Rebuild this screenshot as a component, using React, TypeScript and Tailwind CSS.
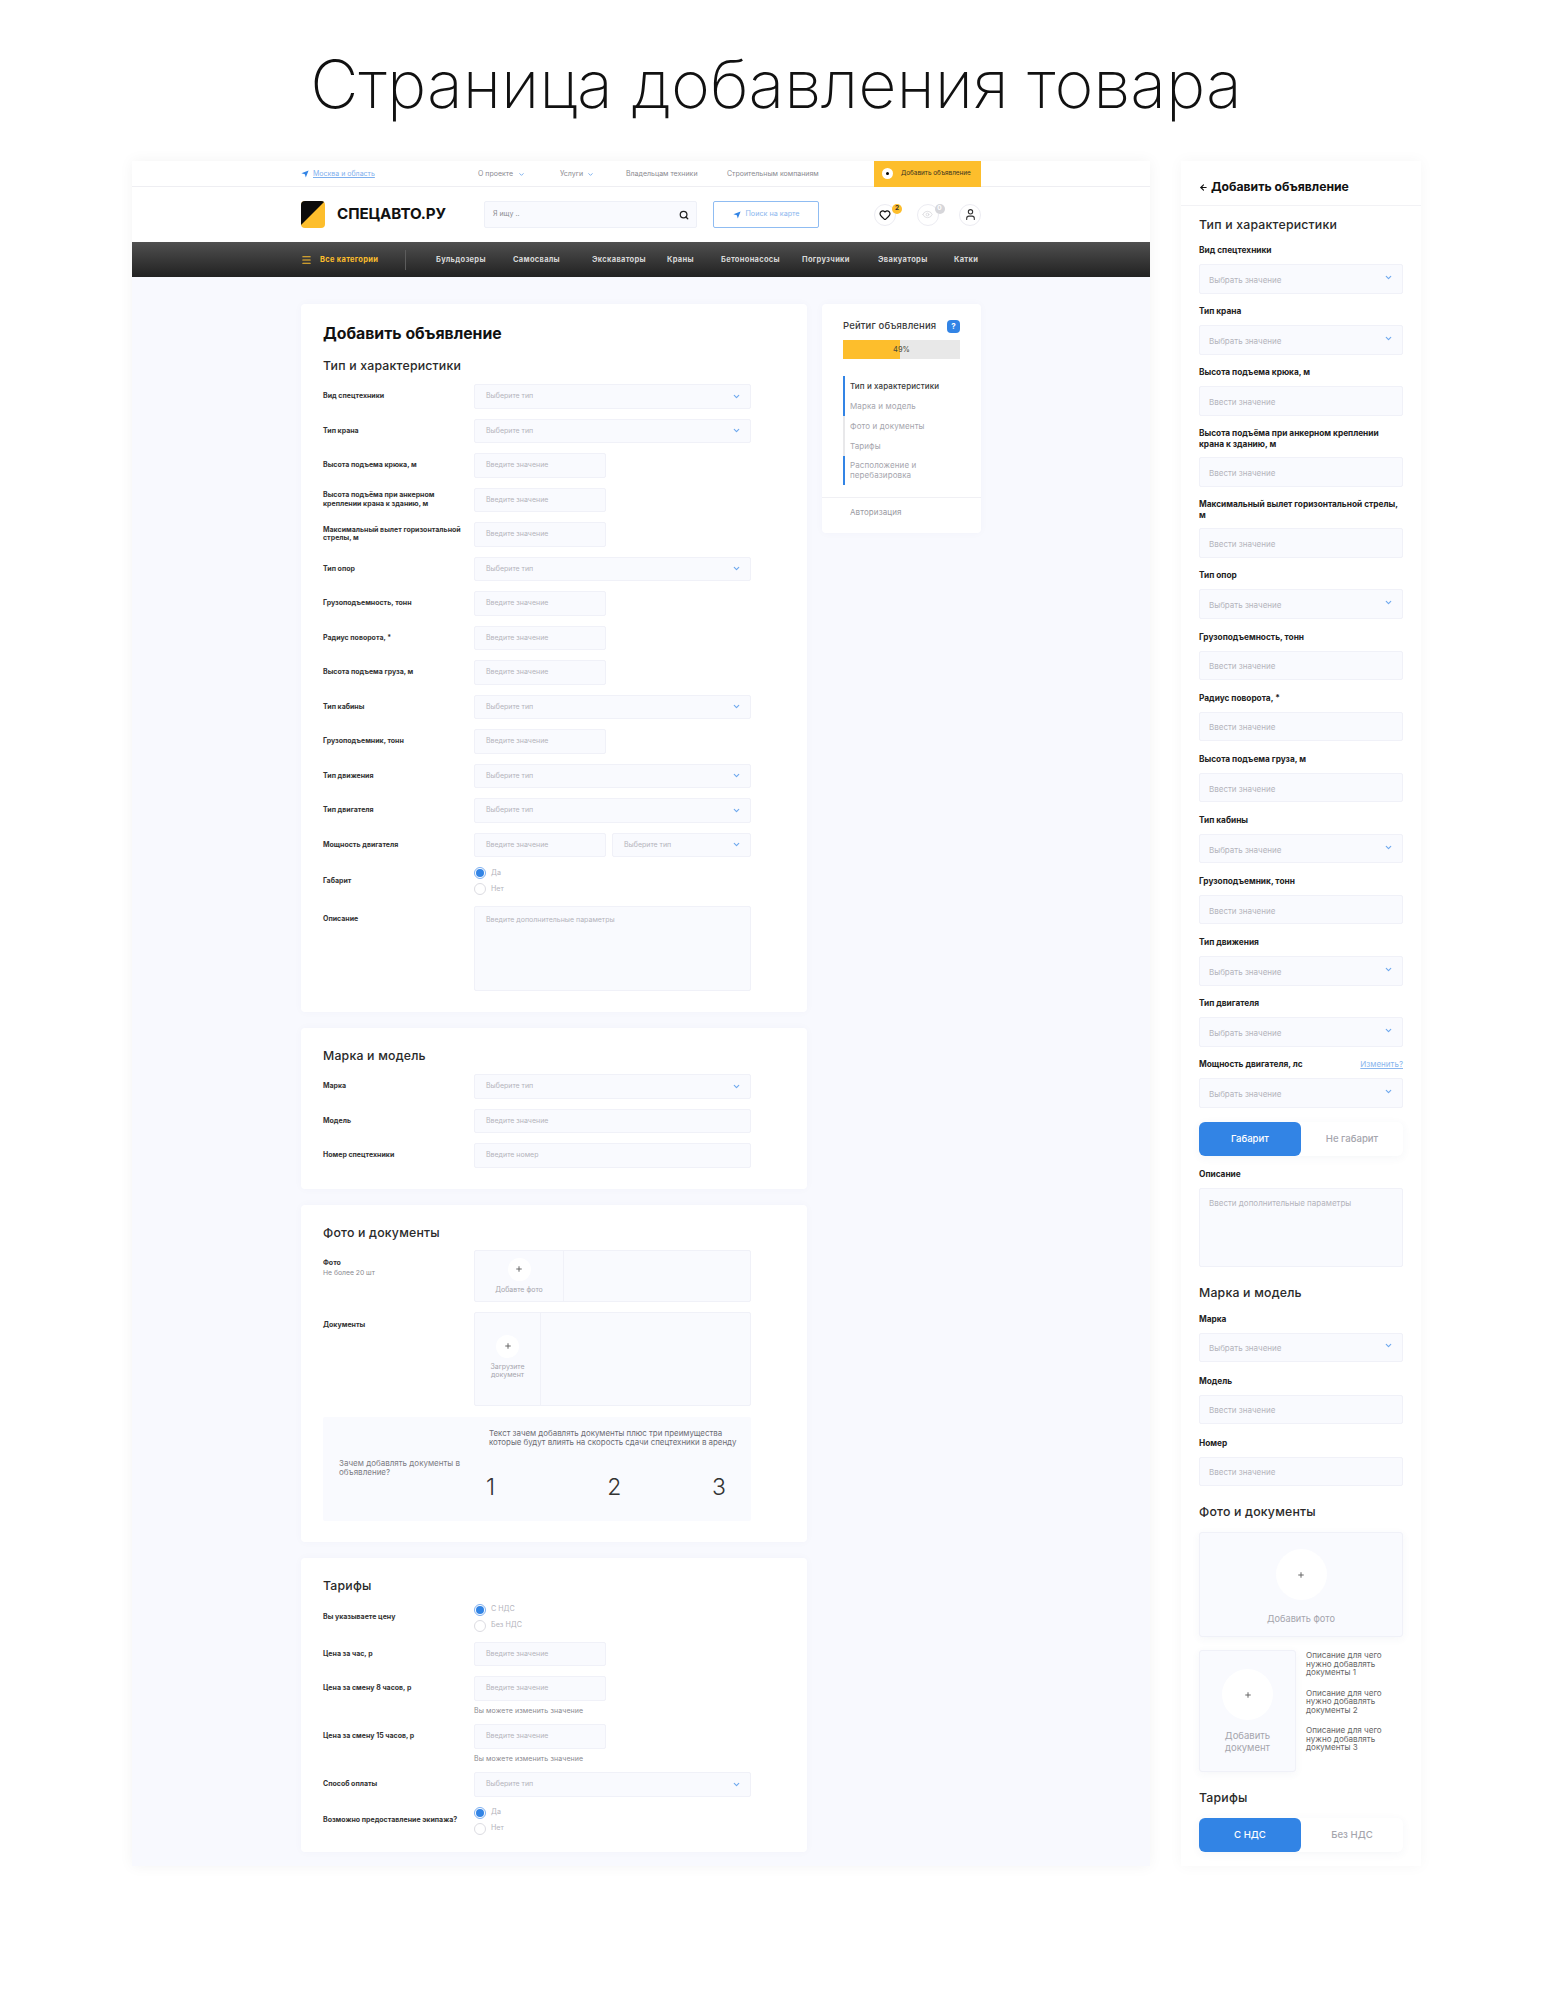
import React from "react";
import { ChevronDown, Search, Heart, Eye, User, Menu, Plus, ArrowLeft } from "lucide-react";

const Arrow = ({ className }: { className?: string }) => (
  <svg viewBox="0 0 10 10" className={className} fill="currentColor"><path d="M0.5 4.2 9.5 0.5 6 9.5 4.8 5.4Z" /></svg>
);

const Logo = () => (
  <svg viewBox="0 0 24 27" className="h-[27px] w-[24px]">
    <defs><clipPath id="lg"><rect x="0" y="0" width="24" height="27" rx="4" /></clipPath></defs>
    <g clipPath="url(#lg)">
      <rect width="24" height="27" fill="#fdbe2c" />
      <path d="M0 0H24L0 24Z" fill="#0b0b0b" />
    </g>
  </svg>
);

const Chev = () => <ChevronDown className="h-[9px] w-[9px] text-[#6ea8ee]" strokeWidth={3} />;

const Field = ({ text, wide, select, w }: { text: string; wide?: boolean; select?: boolean; w?: string }) => (
  <div className={`flex h-[24.5px] items-center justify-between rounded-[2px] border border-[#f0f1f8] bg-[#f9fafe] pl-[11px] pr-[9px] text-[7px] text-[#b4b4bc] ${w ?? (wide ? "w-[277px]" : "w-[132px]")}`}>
    <span>{text}</span>
    {select && <Chev />}
  </div>
);

const Lbl = ({ children }: { children: React.ReactNode }) => (
  <div className="w-[151px] pr-[2px] text-[7px] font-bold leading-[8.3px] text-[#333]">{children}</div>
);

const Row = ({ label, children }: { label: React.ReactNode; children: React.ReactNode }) => (
  <div className="flex min-h-[24.5px] items-center">
    <Lbl>{label}</Lbl>
    {children}
  </div>
);

const TS = "Выберите тип";
const TI = "Введите значение";

const Radio = ({ on, text }: { on?: boolean; text: string }) => (
  <div className="flex h-[12px] items-center gap-[5px]">
    <span className={`flex h-[12px] w-[12px] items-center justify-center rounded-full border ${on ? "border-[#7fb0f0]" : "border-[#dcdce2]"}`}>
      {on && <span className="h-[8px] w-[8px] rounded-full bg-[#3284e5]" />}
    </span>
    <span className="text-[7.2px] text-[#b4b4bc]">{text}</span>
  </div>
);

const Radios = ({ a, b }: { a: string; b: string }) => (
  <div className="flex h-[28px] flex-col justify-between">
    <Radio on text={a} />
    <Radio text={b} />
  </div>
);

const Card = ({ children, className }: { children: React.ReactNode; className?: string }) => (
  <div className={`rounded-[4px] bg-white pl-[22px] pr-[56px] shadow-[0_0_8px_rgba(60,70,120,0.03)] ${className ?? ""}`}>{children}</div>
);

const H2 = ({ children }: { children: React.ReactNode }) => (
  <div className="h-[16px] text-[12.3px] font-medium leading-[16px] tracking-[0.2px] text-[#2a2a2a]">{children}</div>
);

const PlusCircle = ({ size }: { size: string }) => (
  <div className={`flex items-center justify-center rounded-full bg-white ${size}`}>
    <Plus className="h-[8px] w-[8px] text-[#666]" strokeWidth={3} />
  </div>
);

const TopBar = () => (
  <div className="flex h-[26px] items-center border-b border-[#eeeef2] pl-[169px] pt-[1px] text-[7px] text-[#8a8a90]">
    <div className="flex w-[177px] items-center gap-[4px]">
      <Arrow className="h-[8px] w-[8px] text-[#3284e5]" />
      <span className="text-[#7fb0ee] underline">Москва и область</span>
    </div>
    <div className="flex w-[82px] items-center gap-[5px]">О проекте <ChevronDown className="h-[7px] w-[7px] text-[#6ea8ee]" strokeWidth={3} /></div>
    <div className="flex w-[66px] items-center gap-[4px]">Услуги <ChevronDown className="h-[7px] w-[7px] text-[#6ea8ee]" strokeWidth={3} /></div>
    <div className="w-[101px]">Владельцам техники</div>
    <div className="w-[147px]">Строительным компаниям</div>
    <div className="mt-[-1px] flex h-[26px] w-[107px] items-center gap-[8px] bg-[#fdbe2c] pl-[8px] text-[6.4px] text-[#3a3320]">
      <span className="flex h-[11px] w-[11px] items-center justify-center rounded-full bg-white">
        <span className="h-[3px] w-[3px] rounded-full bg-black" />
      </span>
      Добавить объявление
    </div>
  </div>
);

const IconCircle = ({ children, badge, badgeClass }: { children: React.ReactNode; badge?: string; badgeClass?: string }) => (
  <div className="relative flex h-[22px] w-[22px] items-center justify-center rounded-full border border-[#ececf2] bg-white">
    {children}
    {badge && (
      <span className={`absolute right-[-7px] top-[-1px] flex h-[10px] w-[10px] items-center justify-center rounded-full text-[6.5px] font-bold ${badgeClass}`}>{badge}</span>
    )}
  </div>
);

const Header = () => (
  <div className="flex h-[55px] items-center pl-[169px]">
    <Logo />
    <div className="w-[159px] pl-[12px] text-[15.2px] font-bold tracking-[-0.1px] text-[#111]">СПЕЦАВТО.РУ</div>
    <div className="flex h-[27px] w-[213px] items-center justify-between rounded-[2px] border border-[#eef0f7] bg-[#f9fafe] pl-[8px] pr-[7px] text-[7px] text-[#8a8a90]">
      Я ищу ..
      <Search className="h-[10px] w-[10px] text-[#222]" strokeWidth={3} />
    </div>
    <div className="ml-[16px] flex h-[27px] w-[106px] items-center justify-center gap-[5px] rounded-[2px] border border-[#8fbcf2] text-[7.2px] text-[#8ab6ee]">
      <Arrow className="h-[8px] w-[8px] text-[#3284e5]" />
      Поиск на карте
    </div>
    <div className="ml-[55px] flex w-[107px] justify-between">
      <IconCircle badge="2" badgeClass="bg-[#fdbe2c] text-[#333]"><Heart className="h-[12px] w-[12px] text-[#111]" strokeWidth={2.4} /></IconCircle>
      <IconCircle badge="0" badgeClass="bg-[#d6d6da] text-white"><Eye className="h-[11px] w-[11px] text-[#d4d4d8]" strokeWidth={1.6} /></IconCircle>
      <IconCircle><User className="h-[13px] w-[13px] text-[#333]" strokeWidth={2} /></IconCircle>
    </div>
  </div>
);

const navItems: [string, string][] = [
  ["Бульдозеры", "w-[77px]"],
  ["Самосвалы", "w-[79px]"],
  ["Экскаваторы", "w-[75px]"],
  ["Краны", "w-[54px]"],
  ["Бетононасосы", "w-[81px]"],
  ["Погрузчики", "w-[76px]"],
  ["Эвакуаторы", "w-[76px]"],
  ["Катки", "w-[24px]"],
];

const Nav = () => (
  <div className="flex h-[35px] items-center bg-gradient-to-b from-[#505050] to-[#222222] pl-[169px] text-[7.5px] font-bold tracking-[0.3px] text-[#d8d8d8]">
    <Menu className="h-[12px] w-[11px] text-[#fdbe2c]" strokeWidth={2.5} />
    <div className="ml-[8px] w-[85px] text-[#fdbe2c]">Все категории</div>
    <div className="mr-[30px] h-[20px] w-px bg-[#5c5c5c]" />
    {navItems.map(([t, w]) => (
      <div key={t} className={`shrink-0 ${w}`}>{t}</div>
    ))}
  </div>
);

const MainForm = () => (
  <div className="flex w-[506px] flex-col gap-[16px]">
    <Card className="pb-[21px] pt-[22px]">
      <div className="h-[16px] text-[15.8px] font-bold leading-[16px] text-[#111]">Добавить объявление</div>
      <div className="mt-[16px]"><H2>Тип и характеристики</H2></div>
      <div className="mt-[10px] flex flex-col gap-[10px]">
        <Row label="Вид спецтехники"><Field text={TS} wide select /></Row>
        <Row label="Тип крана"><Field text={TS} wide select /></Row>
        <Row label="Высота подъема крюка, м"><Field text={TI} /></Row>
        <Row label={<>Высота подъёма при анкерном<br />креплении крана к зданию, м</>}><Field text={TI} /></Row>
        <Row label={<>Максимальный вылет горизонтальной<br />стрелы, м</>}><Field text={TI} /></Row>
        <Row label="Тип опор"><Field text={TS} wide select /></Row>
        <Row label="Грузоподъемность, тонн"><Field text={TI} /></Row>
        <Row label="Радиус поворота, *"><Field text={TI} /></Row>
        <Row label="Высота подъема груза, м"><Field text={TI} /></Row>
        <Row label="Тип кабины"><Field text={TS} wide select /></Row>
        <Row label="Грузоподъемник, тонн"><Field text={TI} /></Row>
        <Row label="Тип движения"><Field text={TS} wide select /></Row>
        <Row label="Тип двигателя"><Field text={TS} wide select /></Row>
        <Row label="Мощность двигателя">
          <div className="flex w-[277px] justify-between">
            <Field text={TI} />
            <Field text={TS} select w="w-[139px]" />
          </div>
        </Row>
        <Row label="Габарит"><Radios a="Да" b="Нет" /></Row>
        <div className="mt-[1px] flex">
          <div className="pt-[9px]"><Lbl>Описание</Lbl></div>
          <div className="h-[85px] w-[277px] rounded-[2px] border border-[#f0f1f8] bg-[#f9fafe] pl-[11px] pt-[9px] text-[7px] leading-[8px] text-[#b4b4bc]">
            Введите дополнительные параметры
          </div>
        </div>
      </div>
    </Card>

    <Card className="pb-[21px] pt-[20px]">
      <H2>Марка и модель</H2>
      <div className="mt-[10px] flex flex-col gap-[10px]">
        <Row label="Марка"><Field text={TS} wide select /></Row>
        <Row label="Модель"><Field text={TI} wide /></Row>
        <Row label="Номер спецтехники"><Field text="Введите номер" wide /></Row>
      </div>
    </Card>

    <Card className="pb-[21px] pt-[20px]">
      <H2>Фото и документы</H2>
      <div className="mt-[9px] flex">
        <div className="w-[151px] pt-[9px]">
          <Lbl>Фото</Lbl>
          <div className="mt-[2px] text-[6.8px] leading-[8px] text-[#8a8a90]">Не более 20 шт</div>
        </div>
        <div className="flex h-[52px] w-[277px] rounded-[2px] border border-[#f0f1f8] bg-[#f9fafe]">
          <div className="flex w-[89px] flex-col items-center border-r border-[#f0f1f8] pt-[7px]">
            <PlusCircle size="h-[23px] w-[23px]" />
            <div className="mt-[4px] text-[7px] leading-[9px] text-[#a5a5ad]">Добавте фото</div>
          </div>
        </div>
      </div>
      <div className="mt-[10px] flex">
        <div className="pt-[9px]"><Lbl>Документы</Lbl></div>
        <div className="flex h-[94px] w-[277px] rounded-[2px] border border-[#f0f1f8] bg-[#f9fafe]">
          <div className="flex w-[66px] flex-col items-center border-r border-[#f0f1f8] pt-[22px]">
            <PlusCircle size="h-[23px] w-[23px]" />
            <div className="mt-[5px] text-center text-[7px] leading-[8.5px] text-[#a5a5ad]">Загрузите<br />документ</div>
          </div>
        </div>
      </div>
      <div className="mt-[11px] flex h-[104px] w-[428px] rounded-[2px] bg-[#f9fafe] pl-[16px]">
        <div className="w-[150px] pt-[42px] text-[8px] leading-[9.4px] text-[#7c7c84]">Зачем добавлять документы в<br />объявление?</div>
        <div className="pt-[12px]">
          <div className="text-[7.9px] leading-[9.4px] text-[#6c6c74]">
            Текст зачем добавлять документы плюс три преимущества<br />которые будут влиять на скорость сдачи спецтехники в аренду
          </div>
          <div className="ml-[-3px] mt-[27px] flex w-[240px] text-[23px] font-light leading-[26px] text-[#333]">
            <div className="w-[125px]">1</div>
            <div className="w-[108px]">2</div>
            <div>3</div>
          </div>
        </div>
      </div>
    </Card>

    <Card className="pb-[17px] pt-[20px]">
      <H2>Тарифы</H2>
      <div className="mt-[10px] flex flex-col gap-[10px]">
        <Row label="Вы указываете цену"><Radios a="С НДС" b="Без НДС" /></Row>
        <Row label="Цена за час, р"><Field text={TI} /></Row>
        <div>
          <Row label="Цена за смену 8 часов, р"><Field text={TI} /></Row>
          <div className="ml-[151px] h-[13.5px] pt-[5px] text-[7px] leading-[9px] tracking-[0.1px] text-[#8a8a90]">Вы можете изменить значение</div>
        </div>
        <div>
          <Row label="Цена за смену 15 часов, р"><Field text={TI} /></Row>
          <div className="ml-[151px] h-[13.5px] pt-[5px] text-[7px] leading-[9px] tracking-[0.1px] text-[#8a8a90]">Вы можете изменить значение</div>
        </div>
        <Row label="Способ оплаты"><Field text={TS} wide select /></Row>
        <Row label="Возможно предоставление экипажа?"><Radios a="Да" b="Нет" /></Row>
      </div>
    </Card>
  </div>
);

const steps: [string, boolean, boolean][] = [
  ["Тип и характеристики", true, true],
  ["Марка и модель", true, false],
  ["Фото и документы", false, false],
  ["Тарифы", false, false],
];

const RatingCard = () => (
  <div className="ml-[15px] h-[229px] w-[159px] rounded-[4px] bg-white pt-[15px] shadow-[0_0_8px_rgba(60,70,120,0.03)]">
    <div className="flex h-[14px] items-center justify-between pl-[21px] pr-[21px]">
      <span className="text-[9.5px] font-medium tracking-[0.15px] text-[#3a3a3a]">Рейтиг объявления</span>
      <span className="flex h-[13px] w-[13px] items-center justify-center rounded-[4px] bg-[#3284e5] text-[8px] font-bold text-white">?</span>
    </div>
    <div className="ml-[21px] mt-[7px] flex h-[19px] w-[117px] items-center justify-center bg-[linear-gradient(to_right,#fdbe2c_49%,#e8e8e8_49%)] text-[7.5px] text-[#4a4a3a]">49%</div>
    <div className="ml-[21px] mt-[17px]">
      {steps.map(([t, blue, dark]) => (
        <div key={t} className={`flex h-[20px] items-center border-l-[2px] pl-[5px] text-[8px] tracking-[0.1px] ${blue ? "border-[#3284e5]" : "border-[#e8e8ea]"} ${dark ? "font-medium text-[#3a3a3a]" : "text-[#a5a5ad]"}`}>{t}</div>
      ))}
      <div className="flex h-[29px] items-center border-l-[2px] border-[#3284e5] pl-[5px] text-[8px] leading-[9.5px] tracking-[0.1px] text-[#a5a5ad]">
        <span>Расположение и<br />перебазировка</span>
      </div>
    </div>
    <div className="mt-[12px] border-t border-[#f0f0f4] pl-[28px] pt-[10px] text-[8px] leading-[9px] tracking-[0.1px] text-[#9a9aa2]">Авторизация</div>
  </div>
);

const MLabel = ({ children, tight }: { children: React.ReactNode; tight?: boolean }) => (
  <div className={`text-[8.3px] font-bold text-[#222] ${tight ? "leading-[10.5px]" : "leading-[11px]"}`}>{children}</div>
);

const MField = ({ text, select }: { text: string; select?: boolean }) => (
  <div className="mt-[8px] flex h-[29.5px] items-center justify-between rounded-[2px] border border-[#f0f1f8] bg-[#f9fafe] pl-[9px] pr-[9px] text-[8px] text-[#b4b4bc]">
    <span className="pt-[2px]">{text}</span>
    {select && <div className="mb-[3px]"><Chev /></div>}
  </div>
);

const MGroup = ({ label, text, select, tight }: { label: React.ReactNode; text: string; select?: boolean; tight?: boolean }) => (
  <div>
    <MLabel tight={tight}>{label}</MLabel>
    <MField text={text} select={select} />
  </div>
);

const Toggle = ({ a, b }: { a: string; b: string }) => (
  <div className="flex h-[34px] w-[204px] rounded-[6px] bg-white text-[9.6px] shadow-[0_2px_10px_rgba(60,70,120,0.05)]">
    <div className="flex w-[102px] items-center justify-center rounded-[6px] bg-[#3284e5] font-medium text-white">{a}</div>
    <div className="flex w-[102px] items-center justify-center font-medium text-[#a5a5ad]">{b}</div>
  </div>
);

const MS = "Выбрать значение";
const MI = "Ввести значение";

const Mobile = () => (
  <div className="w-[240px] bg-white shadow-[0_0_14px_rgba(0,0,0,0.04)]">
    <div className="flex h-[45px] items-center gap-[3px] border-b border-[#f2f2f5] pl-[18px] pt-[9px] text-[12.2px] font-bold text-[#111]">
      <ArrowLeft className="h-[9px] w-[9px]" strokeWidth={3} />
      Добавить объявление
    </div>
    <div className="px-[18px] pb-[14px] pt-[11px]">
      <H2>Тип и характеристики</H2>
      <div className="mt-[12px] flex flex-col gap-[12.6px]">
        <MGroup label="Вид спецтехники" text={MS} select />
        <MGroup label="Тип крана" text={MS} select />
        <MGroup label="Высота подъема крюка, м" text={MI} />
        <MGroup tight label={<>Высота подъёма при анкерном креплении<br />крана к зданию, м</>} text={MI} />
        <MGroup tight label={<>Максимальный вылет горизонтальной стрелы,<br />м</>} text={MI} />
        <MGroup label="Тип опор" text={MS} select />
        <MGroup label="Грузоподъемность, тонн" text={MI} />
        <MGroup label="Радиус поворота, *" text={MI} />
        <MGroup label="Высота подъема груза, м" text={MI} />
        <MGroup label="Тип кабины" text={MS} select />
        <MGroup label="Грузоподъемник, тонн" text={MI} />
        <MGroup label="Тип движения" text={MS} select />
        <MGroup label="Тип двигателя" text={MS} select />
        <div>
          <div className="flex items-center justify-between">
            <MLabel>Мощность двигателя, лс</MLabel>
            <span className="text-[8px] leading-[11px] text-[#8ab6ee] underline">Изменить?</span>
          </div>
          <MField text={MS} select />
        </div>
      </div>
      <div className="mt-[14px]"><Toggle a="Габарит" b="Не габарит" /></div>
      <div className="mt-[13px]"><MLabel>Описание</MLabel></div>
      <div className="mt-[8px] h-[79px] rounded-[2px] border border-[#f0f1f8] bg-[#f9fafe] pl-[9px] pt-[9px] text-[8px] leading-[10px] text-[#b4b4bc]">Ввести дополнительные параметры</div>
      <div className="mt-[18px]"><H2>Марка и модель</H2></div>
      <div className="mt-[13px] flex flex-col gap-[13.5px]">
        <MGroup label="Марка" text={MS} select />
        <MGroup label="Модель" text={MI} />
        <MGroup label="Номер" text={MI} />
      </div>
      <div className="mt-[18px]"><H2>Фото и документы</H2></div>
      <div className="mt-[12px] flex h-[105px] flex-col items-center rounded-[3px] border border-[#f0f1f8] bg-[#f9fafe] pt-[16px] shadow-[0_2px_8px_rgba(60,70,120,0.05)]">
        <PlusCircle size="h-[51px] w-[51px]" />
        <div className="mt-[13px] text-[9.2px] leading-[11px] text-[#a5a5ad]">Добавить фото</div>
      </div>
      <div className="mt-[13px] flex">
        <div className="flex h-[122px] w-[97px] flex-col items-center rounded-[3px] border border-[#f0f1f8] bg-[#f9fafe] pt-[18px] shadow-[0_2px_8px_rgba(60,70,120,0.05)]">
          <PlusCircle size="h-[51px] w-[51px]" />
          <div className="mt-[10px] text-center text-[9.5px] leading-[11.5px] text-[#a5a5ad]">Добавить<br />документ</div>
        </div>
        <div className="ml-[10px] flex flex-col gap-[12.4px] pt-[1px] text-[8.1px] leading-[8.4px] text-[#666]">
          <div>Описание для чего<br />нужно добавлять<br />документы 1</div>
          <div>Описание для чего<br />нужно добавлять<br />документы 2</div>
          <div>Описание для чего<br />нужно добавлять<br />документы 3</div>
        </div>
      </div>
      <div className="mt-[18px]"><H2>Тарифы</H2></div>
      <div className="mt-[12px]"><Toggle a="С НДС" b="Без НДС" /></div>
    </div>
  </div>
);

export default function App() {
  return (
    <div className="min-h-[2010px] bg-white [font-family:Inter,sans-serif]">
      <div className="h-[161px] pt-[44px] text-center text-[66.5px] font-extralight leading-[80px] text-[#111]">
        Страница добавления товара
      </div>
      <div className="flex items-start pl-[132px]">
        <div className="w-[1018px] bg-[#f8f9fe] shadow-[0_0_14px_rgba(0,0,0,0.05)]">
          <div className="bg-white">
            <TopBar />
            <Header />
          </div>
          <Nav />
          <div className="flex items-start pb-[14px] pl-[169px] pt-[27px]">
            <MainForm />
            <RatingCard />
          </div>
        </div>
        <div className="ml-[31px]"><Mobile /></div>
      </div>
    </div>
  );
}
